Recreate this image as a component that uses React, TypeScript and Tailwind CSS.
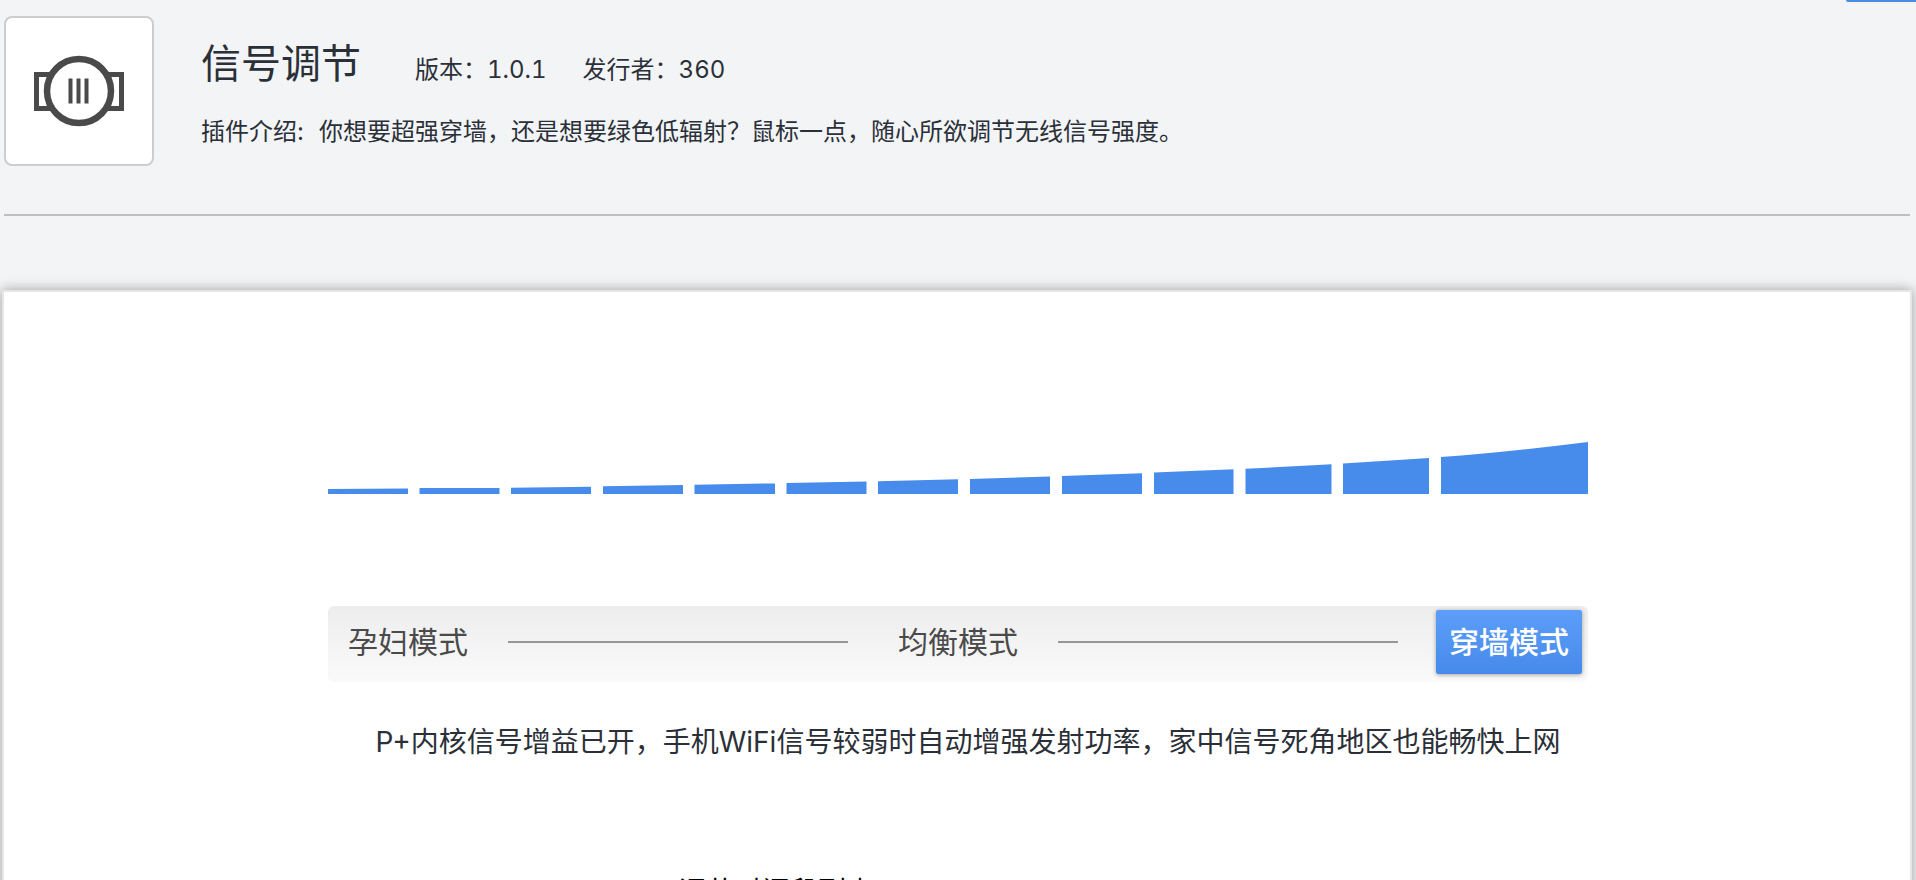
import { useState } from "react"

interface Mode {
  id: string
  label: string
  description: string
}

const modes: Mode[] = [
  { id: "low", label: "孕妇模式", description: "" },
  { id: "balanced", label: "均衡模式", description: "" },
  {
    id: "strong",
    label: "穿墙模式",
    description:
      "P+内核信号增益已开，手机WiFi信号较弱时自动增强发射功率，家中信号死角地区也能畅快上网",
  },
]

// each bar: left edge, right edge, height at the left, height at the right
const bars = [
  [0, 80, 5, 5.5],
  [91.5, 171.5, 6, 6],
  [183, 263, 6.3, 7.3],
  [275, 355, 7.8, 9],
  [366.5, 447, 9.3, 10.6],
  [458.5, 538.5, 11, 12.4],
  [550, 630, 12.7, 14.7],
  [642, 722, 15, 17.5],
  [734, 814, 18, 20.7],
  [826, 905.5, 21.5, 24.7],
  [917.5, 1003.5, 25.2, 29.7],
  [1015, 1101, 30.5, 36],
]

function PluginIcon() {
  return (
    <svg viewBox="0 0 146 146" className="h-full w-full" fill="none" stroke="#4a4a4a">
      <path d="M47 56.5H30.5v34H47M99 56.5h16.5v34H99" strokeWidth="5" />
      <circle cx="73" cy="73" r="32" fill="#fff" strokeWidth="6.5" />
      <path d="M64.5 60.5v25M72.5 60.5v25M80.5 60.5v25" strokeWidth="4" />
    </svg>
  )
}

function SignalChart() {
  return (
    <svg viewBox="0 0 1260 52" className="block w-full" fill="#478ceb">
      {bars.map(([x1, x2, h1, h2]) => (
        <path key={x1} d={`M${x1} 52V${52 - h1}L${x2} ${52 - h2}V52Z`} />
      ))}
      <path d="M1113 52V15Q1180 10 1260 0V52Z" />
    </svg>
  )
}

export default function App() {
  const [active, setActive] = useState("strong")
  const current = modes.find(m => m.id === active)

  return (
    <div
      lang="zh-CN"
      className="flex min-h-screen flex-col bg-[#f2f4f6] font-['Inter','Noto_Sans_CJK_SC',sans-serif] text-[#2b3038]"
    >
      {/* Top action */}
      <div className="flex h-4 items-start justify-end">
        <button type="button" aria-label="操作" className="h-0.5 w-[70px] rounded-bl bg-[#4a8be2]" />
      </div>

      {/* Header */}
      <header className="ml-1 mr-1.5 flex gap-[47px] border-b-2 border-[#bdbfc1] pb-12">
        <div className="h-[150px] w-[150px] shrink-0 rounded-lg border-2 border-[#cccdce] bg-white">
          <PluginIcon />
        </div>
        <div className="pt-[18px]">
          <div className="flex items-baseline text-2xl tabular-nums">
            <h1 className="mr-[54px] text-[40px] leading-[60px]">信号调节</h1>
            <p className="mr-9">版本：1.0.1</p>
            <p>发行者：360</p>
          </div>
          <p className="mt-[22px] text-2xl">
            <span className="mr-[15px]">插件介绍:</span>
            你想要超强穿墙，还是想要绿色低辐射？鼠标一点，随心所欲调节无线信号强度。
          </p>
        </div>
      </header>

      {/* Signal panel */}
      <main className="ml-0.5 mr-1 mt-[74px] grow border-2 border-b-0 border-[#e6e6e7] bg-white pl-[18px] pr-4 pt-[150px] shadow-[0_0_12px_rgba(0,0,0,0.36)]">
        <div className="mx-auto max-w-[1260px]">
          <SignalChart />

          <div className="mt-28 flex h-[76px] items-center rounded-md bg-linear-to-b from-[#ededed] to-[#fafafa] pb-1 pl-5 pr-1.5 text-[30px] text-[#4a4a4a]">
            {modes.map((mode, idx) => (
              <div key={mode.id} className={idx < 2 ? "flex grow items-center" : "flex items-center"}>
                <button
                  type="button"
                  aria-pressed={mode.id === active}
                  onClick={() => setActive(mode.id)}
                  className={
                    mode.id === active
                      ? "h-16 rounded-xs bg-linear-to-b from-[#5c9ef9] to-[#468aea] px-[13px] font-medium text-white shadow-[0_1px_4px_rgba(0,0,0,0.35)]"
                      : "h-16"
                  }
                >
                  {mode.label}
                </button>
                {idx < 2 && (
                  <span className={idx === 0 ? "ml-10 mr-[50px] h-0.5 grow bg-[#979797]" : "ml-10 mr-[38px] h-0.5 grow bg-[#979797]"} />
                )}
              </div>
            ))}
          </div>

          <p className="mt-10 min-h-10 pl-5 text-center text-[28px] leading-10">{current?.description}</p>

          <h2 className="mt-[110px] pl-[350px] text-[28px] leading-10 text-black">调节时间段列表</h2>
        </div>
      </main>
    </div>
  )
}
